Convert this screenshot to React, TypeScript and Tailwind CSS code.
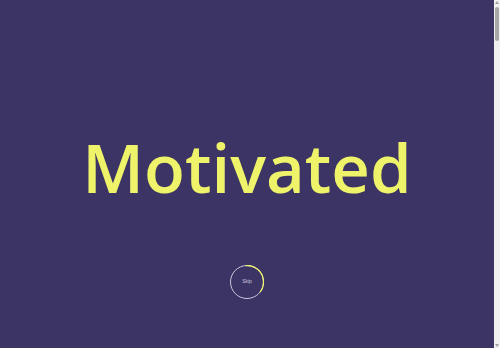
import React from 'react'

function SkipButton() {
  return (
    <button className="relative w-[34px] h-[34px] flex items-center justify-center">
      <svg className="absolute inset-0" viewBox="0 0 34 34" width="34" height="34">
        <circle cx="17" cy="17" r="16.5" fill="none" stroke="#c9c6dc" strokeWidth="1" />
        <circle
          cx="17"
          cy="17"
          r="16.5"
          fill="none"
          stroke="#eef36a"
          strokeWidth="1.3"
          strokeDasharray="38 100"
          transform="rotate(-95 17 17)"
        />
      </svg>
      <span className="text-[5px] text-[#c9c6dc]" style={{ fontFamily: '"Liberation Sans", sans-serif' }}>
        Skip
      </span>
    </button>
  )
}

function Scrollbar() {
  return (
    <div className="w-[6px] h-[348px] bg-[#f0f0f0] flex flex-col items-center">
      <div className="w-0 h-0 mt-[1px] border-l-[2px] border-r-[2px] border-b-[3px] border-l-transparent border-r-transparent border-b-[#a0a0a0]" />
      <div className="mt-[3px] w-[4px] h-[34px] rounded-[2px] bg-[#a8a8a8]" />
      <div className="flex-1" />
      <div className="w-0 h-0 mb-[1px] border-l-[2px] border-r-[2px] border-t-[3px] border-l-transparent border-r-transparent border-t-[#a0a0a0]" />
    </div>
  )
}

export default function App() {
  return (
    <div className="h-[348px] overflow-hidden flex bg-[#3c3464]">
      <section className="flex-1 h-[348px] flex flex-col items-center">
        <h1
          className="mt-[127px] text-[67px] leading-[80px] font-semibold text-[#eef36a]"
          style={{ fontFamily: '"Open Sans", sans-serif' }}
        >
          Motivated
        </h1>
        <div className="mt-[58px]">
          <SkipButton />
        </div>
      </section>
      <Scrollbar />
    </div>
  )
}
